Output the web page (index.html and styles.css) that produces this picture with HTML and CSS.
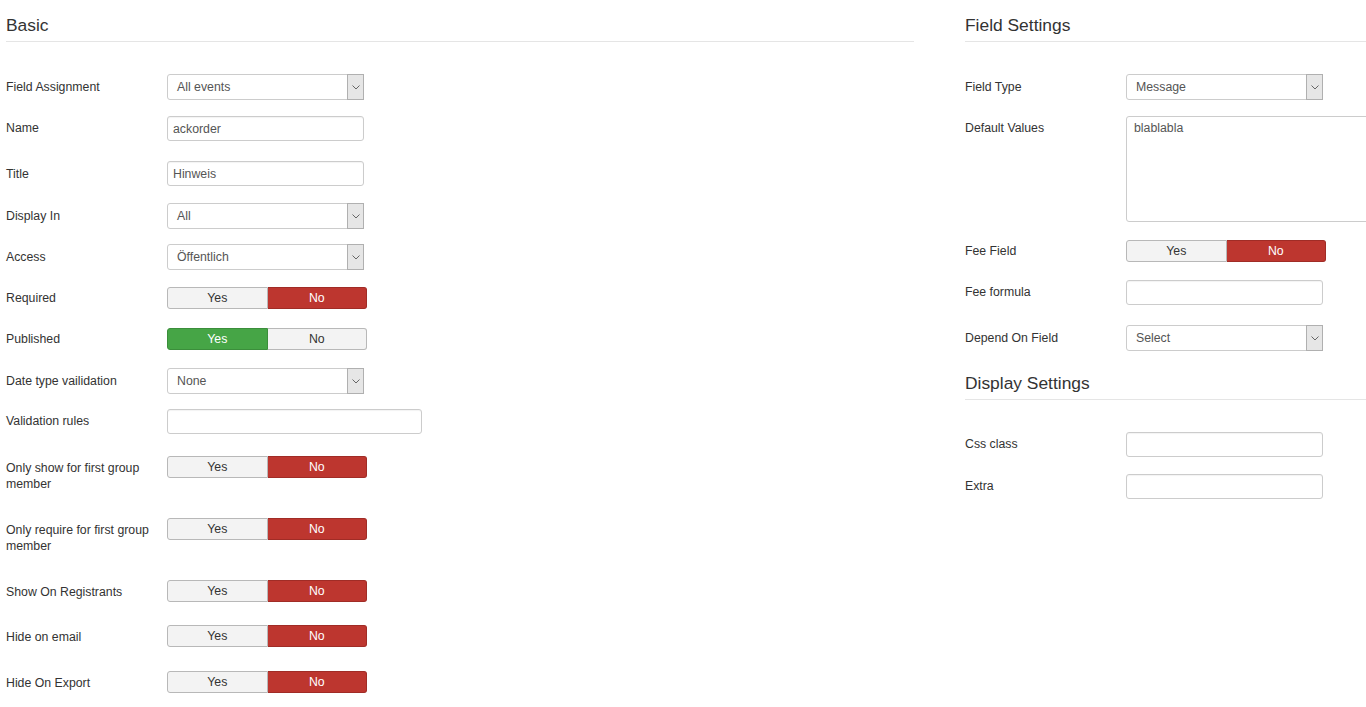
FILE: index.html
```html
<!DOCTYPE html>
<html lang="de">
<head>
<meta charset="utf-8">
<title>Field</title>
<link rel="stylesheet" href="styles.css">
</head>
<body>
<div class="page">
  <div class="col">
    <h3 class="legend">Basic</h3>

    <div class="cg sel r42"><label class="lbl">Field Assignment</label>
      <div class="select"><span>All events</span><span class="arrow"><svg width="8" height="5" viewBox="0 0 8 5"><polyline points="0.5,0.5 4,4 7.5,0.5" fill="none" stroke="#666" stroke-width="1"/></svg></span></div></div>

    <div class="cg r45"><label class="lbl">Name</label>
      <input class="input" type="text" value="ackorder"></div>

    <div class="cg sel r42"><label class="lbl">Title</label>
      <input class="input" type="text" value="Hinweis"></div>

    <div class="cg sel"><label class="lbl">Display In</label>
      <div class="select"><span>All</span><span class="arrow"><svg width="8" height="5" viewBox="0 0 8 5"><polyline points="0.5,0.5 4,4 7.5,0.5" fill="none" stroke="#666" stroke-width="1"/></svg></span></div></div>

    <div class="cg sel r43"><label class="lbl">Access</label>
      <div class="select"><span>Öffentlich</span><span class="arrow"><svg width="8" height="5" viewBox="0 0 8 5"><polyline points="0.5,0.5 4,4 7.5,0.5" fill="none" stroke="#666" stroke-width="1"/></svg></span></div></div>

    <div class="cg tog"><label class="lbl">Required</label>
      <div class="toggle"><span class="tb">Yes</span><span class="tb no-on">No</span></div></div>

    <div class="cg tog r40"><label class="lbl">Published</label>
      <div class="toggle"><span class="tb yes-on">Yes</span><span class="tb">No</span></div></div>

    <div class="cg sel"><label class="lbl">Date type vailidation</label>
      <div class="select"><span>None</span><span class="arrow"><svg width="8" height="5" viewBox="0 0 8 5"><polyline points="0.5,0.5 4,4 7.5,0.5" fill="none" stroke="#666" stroke-width="1"/></svg></span></div></div>

    <div class="cg r47"><label class="lbl">Validation rules</label>
      <input class="input wide" type="text" value=""></div>

    <div class="cg r62"><label class="lbl">Only show for first group member</label>
      <div class="toggle"><span class="tb">Yes</span><span class="tb no-on">No</span></div></div>

    <div class="cg r62"><label class="lbl">Only require for first group member</label>
      <div class="toggle"><span class="tb">Yes</span><span class="tb no-on">No</span></div></div>

    <div class="cg r45"><label class="lbl">Show On Registrants</label>
      <div class="toggle"><span class="tb">Yes</span><span class="tb no-on">No</span></div></div>

    <div class="cg r46"><label class="lbl">Hide on email</label>
      <div class="toggle"><span class="tb">Yes</span><span class="tb no-on">No</span></div></div>

    <div class="cg"><label class="lbl">Hide On Export</label>
      <div class="toggle"><span class="tb">Yes</span><span class="tb no-on">No</span></div></div>
  </div>

  <div class="col">
    <h3 class="legend">Field Settings</h3>

    <div class="cg sel r42"><label class="lbl">Field Type</label>
      <div class="select"><span>Message</span><span class="arrow"><svg width="8" height="5" viewBox="0 0 8 5"><polyline points="0.5,0.5 4,4 7.5,0.5" fill="none" stroke="#666" stroke-width="1"/></svg></span></div></div>

    <div class="cg r124"><label class="lbl">Default Values</label>
      <textarea class="area">blablabla</textarea></div>

    <div class="cg tog r40"><label class="lbl">Fee Field</label>
      <div class="toggle"><span class="tb">Yes</span><span class="tb no-on">No</span></div></div>

    <div class="cg r45"><label class="lbl">Fee formula</label>
      <input class="input" type="text" value=""></div>

    <div class="cg sel"><label class="lbl">Depend On Field</label>
      <div class="select"><span>Select</span><span class="arrow"><svg width="8" height="5" viewBox="0 0 8 5"><polyline points="0.5,0.5 4,4 7.5,0.5" fill="none" stroke="#666" stroke-width="1"/></svg></span></div></div>

    <h3 class="legend sub">Display Settings</h3>

    <div class="cg r42"><label class="lbl">Css class</label>
      <input class="input" type="text" value=""></div>

    <div class="cg"><label class="lbl">Extra</label>
      <input class="input" type="text" value=""></div>
  </div>
</div>
</body>
</html>
```

FILE: styles.css
```css
html, body {
  margin: 0;
  padding: 0;
  background: #fff;
  overflow: hidden;
}
body {
  font-family: "Liberation Sans", Arial, sans-serif;
  font-size: 12.3px;
  color: #333;
}
.page {
  display: grid;
  grid-template-columns: 908px 1fr;
  column-gap: 51px;
  padding-left: 6px;
}
.col {
  min-width: 0;
}
.legend {
  font-size: 17.4px;
  font-weight: normal;
  line-height: 20px;
  color: #333;
  margin: 15px 0 32px;
  padding-bottom: 6px;
  border-bottom: 1px solid #e5e5e5;
}
.legend.sub {
  margin-top: 7px;
}
.cg {
  display: flex;
  align-items: flex-start;
  height: 41px;
}
.cg.r40 { height: 40px; }
.cg.r42 { height: 42px; }
.cg.r43 { height: 43px; }
.cg.r45 { height: 45px; }
.cg.r46 { height: 46px; }
.cg.r47 { height: 47px; }
.cg.r62 { height: 62px; }
.cg.r124 { height: 124px; }
.lbl {
  flex-shrink: 0;
  width: 150px;
  margin-right: 11px;
  padding-top: 4px;
  line-height: 16px;
  color: #333;
}
.cg.sel .lbl {
  padding-top: 5px;
}
.cg.tog .lbl {
  padding-top: 3px;
}
.select {
  box-sizing: border-box;
  flex-shrink: 0;
  width: 197px;
  height: 26px;
  border: 1px solid #ccc;
  border-radius: 3px;
  display: flex;
  align-items: center;
  padding-left: 9px;
  color: #555;
  background: #fff;
}
.select .arrow {
  margin: -1px -1px -1px auto;
  align-self: stretch;
  width: 15px;
  border: 1px solid #b0b0b0;
  background: #e6e6e6;
  display: flex;
  align-items: center;
  justify-content: center;
}
.input {
  box-sizing: border-box;
  flex-shrink: 0;
  width: 197px;
  height: 25px;
  border: 1px solid #ccc;
  border-radius: 3px;
  padding: 0 5px;
  font-family: "Liberation Sans", Arial, sans-serif;
  font-size: 12.3px;
  color: #555;
  background: #fff;
  box-shadow: inset 0 1px 1px rgba(0,0,0,0.05);
  outline: none;
  margin: 0;
}
.input.wide {
  width: 255px;
}
.area {
  box-sizing: border-box;
  flex-shrink: 0;
  width: 262px;
  height: 106px;
  border: 1px solid #ccc;
  border-radius: 3px;
  padding: 3px 7px;
  margin: 0;
  font-family: "Liberation Sans", Arial, sans-serif;
  font-size: 12.3px;
  line-height: 16px;
  color: #555;
  resize: none;
  outline: none;
}
.toggle {
  flex-shrink: 0;
  display: flex;
  width: 200px;
  height: 22px;
}
.tb {
  flex: 1;
  display: flex;
  align-items: center;
  justify-content: center;
  border: 1px solid #b8b8b8;
  background: #f3f3f3;
  color: #333;
}
.tb:first-child {
  border-radius: 3px 0 0 3px;
}
.tb:last-child {
  border-left: none;
  border-radius: 0 3px 3px 0;
}
.tb.no-on {
  background: #bd362f;
  border-color: #a02c26;
  color: #fff;
}
.tb.yes-on {
  background: #46a546;
  border-color: #3b8e3b;
  color: #fff;
}
```
